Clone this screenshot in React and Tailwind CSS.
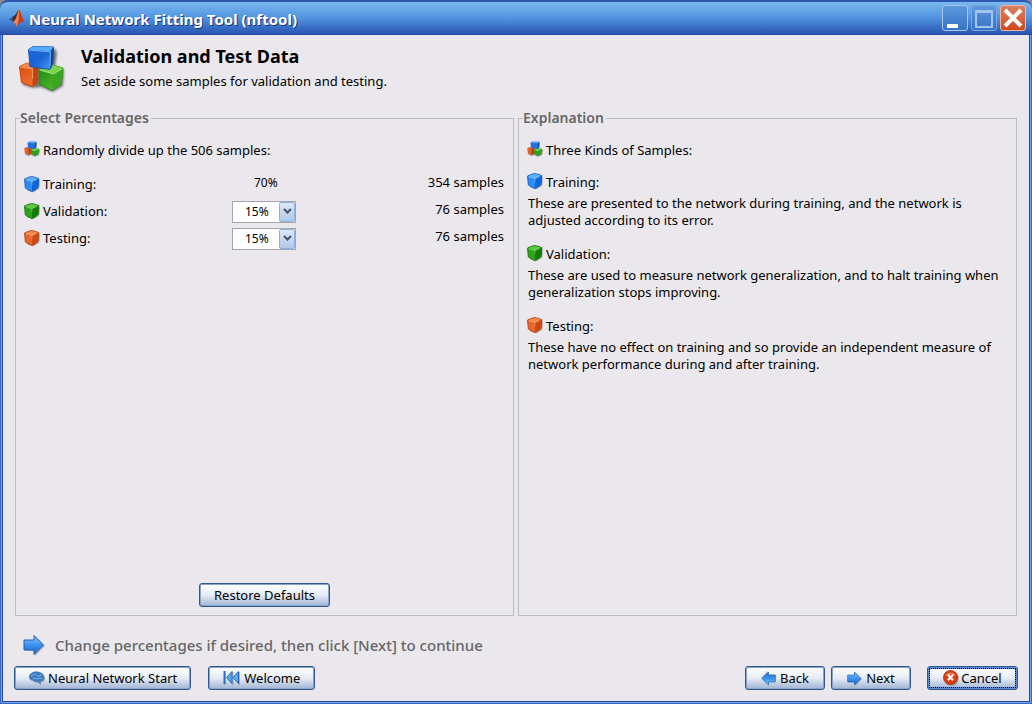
import React, { useState } from 'react';

const cubeColors = {
  blue: { top: '#5fb0fa', left: '#2c8cf6', right: '#0f66dc', edge: '#0f56b8' },
  green: { top: '#5cc83c', left: '#2fa41a', right: '#127c08', edge: '#126a0a' },
  orange: { top: '#f4884a', left: '#e8662a', right: '#cc4a10', edge: '#a83c0c' },
};

const Cube = ({ color }) => {
  const c = cubeColors[color];
  return (
    <svg viewBox="0 0 16 17" className="mb-px h-[17px] w-4 shrink-0" aria-hidden="true">
      <path d="M2 4 L9 2 L15.500 3 Q16.500 8 15 13 L9 16.500 L3 14 Z" fill="#666" opacity="0.45" />
      <path d="M0.500 3 Q4 1.200 7.500 0.500 Q11 1 14.700 2.500 L14.200 11.500 Q11 14.500 8 15.500 Q4.500 14.500 1.300 12 Z" fill={c.left} stroke={c.edge} strokeWidth="0.800" strokeLinejoin="round" />
      <path d="M8 5.400 L14.400 2.800 L13.900 11.400 Q11 14 8 15.100 Z" fill={c.right} />
      <path d="M1 3.200 Q4 1.500 7.500 0.900 Q11 1.400 14.200 2.800 L8 5.400 Z" fill={c.top} />
      <path d="M2 3.800 L8 5.600 L12 4 M8 5.600 V9" fill="none" stroke="#fff" strokeWidth="0.700" opacity="0.4" />
    </svg>
  );
};

const CubeStackSmall = () => (
  <svg viewBox="0 0 16 16" className="mb-0.5 size-4 shrink-0" aria-hidden="true">
    <path d="M5 2 L13 2 L12.500 7 L16 9 L15 14 L11 15.800 L7 14 L4 15 L1 13 L1 7 L5 6 Z" fill="#444" opacity="0.5" />
    <path d="M0.300 7 L4 6 L7.500 7 L7 12.500 L4.500 14 L0.800 12.500 Z" fill="#e8602a" />
    <path d="M4.500 8 L7.500 7 L7 12.500 L4.500 14 Z" fill="#b8420e" />
    <path d="M6.800 9 L11 7 L15.200 8 L14.500 13 L11 15 L7.200 13 Z" fill="#2ea01c" />
    <path d="M6.800 9 L11 7 L15.200 8 L11 10.200 Z" fill="#6cd048" />
    <path d="M3.500 1.500 L6 0.400 L12.300 0.800 L12 6 L10.500 8 L4 7 Z" fill="#2470dc" />
    <path d="M3.500 1.500 L6 0.400 L12.300 0.800 L11 2.300 Z" fill="#68b4fa" />
    <path d="M11 2.300 L12.300 0.800 L12 6 L10.500 8 Z" fill="#0e4cae" />
  </svg>
);

const CubeStack = () => (
  <svg viewBox="0 0 48 48" className="size-12 shrink-0" aria-hidden="true">
    <defs>
      <linearGradient id="blueFace" x1="0" y1="0" x2="1" y2="1">
        <stop offset="0" stopColor="#1a66dc" />
        <stop offset="0.500" stopColor="#1c64d4" />
        <stop offset="1" stopColor="#45a0f8" />
      </linearGradient>
      <linearGradient id="orangeFace" x1="0" y1="0" x2="0.500" y2="1">
        <stop offset="0" stopColor="#d84a0c" />
        <stop offset="1" stopColor="#f0702c" />
      </linearGradient>
      <linearGradient id="greenFace" x1="0" y1="0" x2="1" y2="1">
        <stop offset="0" stopColor="#1c8410" />
        <stop offset="1" stopColor="#5cc830" />
      </linearGradient>
      <filter id="soft" x="-20%" y="-20%" width="140%" height="140%">
        <feGaussianBlur stdDeviation="1.200" />
      </filter>
    </defs>
    <path d="M13 4 L36 4 L38 8 L36 22 L45 25 L44 41 L34 47 L22 42 L14 43 L4 40 L2 22 L12 19 Z" fill="#333" opacity="0.65" filter="url(#soft)" />
    <g strokeLinejoin="round" strokeWidth="1">
      <path d="M0.500 21.500 L8 18 L19 20 L18.500 38 L13.500 41.500 L2.500 37.500 Z" fill="url(#orangeFace)" stroke="#c8440c" />
      <path d="M0.500 21.500 L8 18 L19 20 L13.500 23.500 Z" fill="#f08850" />
      <path d="M13.500 23.500 L19 20 L18.500 38 L13.500 41.500 Z" fill="#c04410" />
      <path d="M1 22 L13.500 24 V34" fill="none" stroke="#ffc09a" opacity="0.6" />
      <path d="M20 24.500 L32 19.500 L44 23 L42.500 38.500 L33 45.500 L21 39.500 Z" fill="url(#greenFace)" stroke="#2c8c18" />
      <path d="M20 24.500 L32 19.500 L44 23 L34.500 29 Z" fill="#7ad450" />
      <path d="M34.500 29 L44 23 L42.500 38.500 L33 45.500 Z" fill="#38a820" />
      <path d="M20.500 25 L34.500 29 L43.500 23.500" fill="none" stroke="#b4f090" opacity="0.8" />
      <path d="M9.500 4.500 L14 1.500 L34.500 2 L34 18 L31 24.500 L11 21.500 Z" fill="url(#blueFace)" stroke="#1458b8" />
      <path d="M9.500 4.500 L14 1.500 L34.500 2 L31.500 6.500 Z" fill="#55acf8" />
      <path d="M31.500 6.500 L34.500 2 L34 18 L31 24.500 Z" fill="#0c48a4" />
      <path d="M10 5 L31.500 7 L31 21" fill="none" stroke="#9ad4ff" opacity="0.65" />
    </g>
  </svg>
);

const MatlabLogo = () => (
  <svg viewBox="0 0 16 18" className="h-5 w-4 shrink-0" aria-hidden="true">
    <path d="M0 10 L4.500 7 L7 9.500 L4 13 Z" fill="#2f5f7a" />
    <path d="M4.500 7 C7 6.500 8 2 9.500 1 L8.500 10 L5 12.500 L3.500 12.500 Z" fill="#4a2430" />
    <path d="M9.500 0.500 C12 2 13 9 15.700 13.500 C13 11.500 11 13.500 7.500 17.500 L8 8 Z" fill="#c83c1c" />
    <path d="M9.500 0.500 C10.500 6 10.500 12 7.500 17.500 C6.500 14.500 5.500 13.500 4 13 C7.500 11 8 5 9.500 0.500 Z" fill="#ee8448" />
  </svg>
);

const Arrow = ({ className }) => (
  <svg viewBox="0 0 22 22" className={`shrink-0 ${className}`} aria-hidden="true">
    <defs>
      <linearGradient id="arrowFill" x1="0" y1="0" x2="0" y2="1">
        <stop offset="0" stopColor="#8cc8fb" />
        <stop offset="0.500" stopColor="#3c92ee" />
        <stop offset="1" stopColor="#1c68cc" />
      </linearGradient>
    </defs>
    <path d="M2 7 H12 V2 L22 12 L12 22 V17 H2 Z" fill="#777" opacity="0.45" />
    <path d="M1 6 H11 V1.500 L20.500 11 L11 20.500 V16 H1 Z" fill="url(#arrowFill)" stroke="#1f5fae" strokeLinejoin="round" />
  </svg>
);

const BrainIcon = () => (
  <svg viewBox="0 0 18 16" className="h-4 w-[18px] shrink-0" aria-hidden="true">
    <path d="M2 8 C2 4 6 2 9 2 C13 2 17 4.500 17 8.500 C17 11 15 12 13 12 L13 15 L10.500 12.500 C8 13 6 12 5 11 C3 11 2 10 2 8 Z" fill="#444" opacity="0.5" />
    <path d="M1 7 C1 3.500 5 1.500 8.500 1.500 C12.500 1.500 16 4 16 7.500 C16 10 14 11 12.500 11 L12 14 L9.500 11.500 C7 12 5.500 11 4.500 10 C2.500 10 1 9 1 7 Z" fill="#3c7cc4" />
    <path d="M3 6 C5 4 6 6 8 4 M9 6.500 C10 5 11 7 13.500 5 M5 8.500 C7 7.500 8 9.500 10 8.500 C12 8 13 9 14 8" fill="none" stroke="#8cc0ec" strokeWidth="0.900" />
  </svg>
);

const RewindIcon = () => (
  <svg viewBox="0 0 17 16" className="h-4 w-[17px] shrink-0" aria-hidden="true">
    <path d="M2 2 V15 M10 2 L4 8 L10 15 Z M17 2 L11 8 L17 15 Z" fill="#666" stroke="#666" opacity="0.4" />
    <path d="M1.500 1 V14" stroke="#2a6cc0" strokeWidth="2" />
    <path d="M9 1.500 L3.500 7.500 L9 13.500 Z M15.500 1.500 L10 7.500 L15.500 13.500 Z" fill="#5aaaf4" stroke="#2463b4" strokeWidth="1" />
  </svg>
);

const StopIcon = () => (
  <svg viewBox="0 0 16 16" className="size-4 shrink-0" aria-hidden="true">
    <circle cx="8.500" cy="8.500" r="7.300" fill="#666" opacity="0.5" />
    <circle cx="7.500" cy="7.500" r="7" fill="#e03a10" stroke="#a82808" strokeWidth="0.800" />
    <path d="M2 6 A6 6 0 0 1 13 6 Q7.500 3 2 6 Z" fill="#fff" opacity="0.35" />
    <path d="M5.500 5.500 L9.500 9.500 M9.500 5.500 L5.500 9.500" stroke="#fff" strokeWidth="2.200" strokeLinecap="round" />
  </svg>
);

const Button = ({ children, className = '' }) => (
  <button
    type="button"
    className={`flex h-6 items-center justify-center rounded-[3px] border border-[#2f568f] bg-linear-to-b from-white via-[#e6ecf4] to-[#a0b4d4] whitespace-nowrap inset-shadow-[0_0_0_1px_#8aa4c8] ${className}`}
  >
    {children}
  </button>
);

const PercentSelect = ({ id, value, onChange }) => (
  <div className="relative h-[22px] w-16">
    <select
      id={id}
      value={value}
      onChange={(e) => onChange(Number(e.target.value))}
      className="h-full w-full appearance-none border border-[#a5a5ac] bg-white pl-3 text-xs text-black"
    >
      {[5, 10, 15, 20, 25, 30, 35].map((n) => (
        <option key={n} value={n}>{n}%</option>
      ))}
    </select>
    <span className="pointer-events-none absolute inset-y-px right-px flex w-4 items-center justify-center rounded-[2px] border border-[#8fb0dc] bg-linear-to-b from-[#dce8f8] to-[#b0c8e8]">
      <svg viewBox="0 0 9 7" className="h-[7px] w-[9px]" aria-hidden="true">
        <path d="M1 1 L4.500 4.500 L8 1" fill="none" stroke="#44566c" strokeWidth="2.200" />
      </svg>
    </span>
  </div>
);

const Panel = ({ title, children }) => (
  <fieldset className="flex min-w-0 flex-1 flex-col border border-[#bdbcc0] px-2 pb-2">
    <legend className="-ml-1 pr-0.5 text-sm leading-4 font-semibold text-[#666]">{title}</legend>
    {children}
  </fieldset>
);

const kinds = [
  { name: 'Training', color: 'blue', text: 'These are presented to the network during training, and the network is adjusted according to its error.' },
  { name: 'Validation', color: 'green', text: 'These are used to measure network generalization, and to halt training when generalization stops improving.' },
  { name: 'Testing', color: 'orange', text: 'These have no effect on training and so provide an independent measure of network performance during and after training.' },
];

const TOTAL = 506;

const App = () => {
  const [validation, setValidation] = useState(15);
  const [testing, setTesting] = useState(15);

  const samples = (percent) => Math.round((TOTAL * percent) / 100);
  const training = TOTAL - samples(validation) - samples(testing);

  const rows = [
    { ...kinds[0], count: training },
    { ...kinds[1], value: validation, set: setValidation, count: samples(validation) },
    { ...kinds[2], value: testing, set: setTesting, count: samples(testing) },
  ];

  return (
    <div className="bg-[#8a8a8a]">
      <div className="flex min-h-screen flex-col rounded-t-lg border border-t-0 border-[#3a68c4] bg-[#ebe8ed] px-0.5 pb-0.5 font-['Noto_Sans','Open_Sans',sans-serif] text-[13px] leading-[17px] text-black shadow-[inset_0_0_0_1px_#6ea6ec,inset_0_0_0_2px_#2448a0]">
        {/* Title bar */}
        <header className="-mx-[3px] flex h-[35px] items-center gap-1 rounded-t-lg border-t-2 border-b border-t-[#2c56b0] border-b-[#2448a0] bg-linear-to-b from-[#7ab8ee] via-[#5293e0] to-[#2a54b2] pr-1.5 pl-[9px]">
          <MatlabLogo />
          <span className="flex-1 pt-0.5 text-[15px] font-bold text-white text-shadow-[1px_1px_0_#1a3080]">
            Neural Network Fitting Tool (nftool)
          </span>
          <div className="flex gap-[3px]">
            <button type="button" aria-label="Minimize" className="size-[26px] rounded-[3px] border border-[#a8c8ea] bg-linear-to-b from-[#5f98dc] to-[#3474c4]">
              <svg viewBox="0 0 24 24" aria-hidden="true"><path d="M4 18 H15 V22 H4 Z" fill="#fff" /></svg>
            </button>
            <button type="button" aria-label="Maximize" className="size-[26px] rounded-[3px] border border-[#7aa6dc] bg-linear-to-b from-[#5f98dc] to-[#3474c4]">
              <svg viewBox="0 0 24 24" aria-hidden="true"><path d="M4 5 H20 V21 H4 Z M3 6 H21" fill="none" stroke="#a4c6ee" strokeWidth="2" /></svg>
            </button>
            <button type="button" aria-label="Close" className="size-[26px] rounded-[3px] border border-[#f0b8a0] bg-linear-to-b from-[#d88060] to-[#d04818]">
              <svg viewBox="0 0 24 24" aria-hidden="true"><path d="M4 4 L20 20 M20 4 L4 20" stroke="#fff" strokeWidth="4" /></svg>
            </button>
          </div>
        </header>

        <div className="flex gap-3.5 px-4 pt-2.5">
          <CubeStack />
          <div>
            <h1 className="text-lg leading-[22px] font-bold">Validation and Test Data</h1>
            <p className="pt-1.5">Set aside some samples for validation and testing.</p>
          </div>
        </div>

        <main className="flex flex-1 flex-col px-3 pt-[17px]">
          <div className="flex flex-1 gap-1">
            <Panel title="Select Percentages">
              <p className="flex items-center gap-[3px] pt-[15px]">
                <CubeStackSmall />
                Randomly divide up the 506 samples:
              </p>
              <table className="mt-3 w-full">
                <tbody>
                  {rows.map((row) => (
                    <tr key={row.name} className="h-[27px]">
                      <th scope="row" className="w-[208px] p-0 text-left font-normal">
                        <span className="flex items-center gap-[3px]">
                          <Cube color={row.color} />
                          {row.set ? <label htmlFor={row.name}>{row.name}:</label> : `${row.name}:`}
                        </span>
                      </th>
                      <td className="p-0">
                        {row.set ? (
                          <PercentSelect id={row.name} value={row.value} onChange={row.set} />
                        ) : (
                          <span className="block pb-1 pl-[22px] text-xs">{100 - validation - testing}%</span>
                        )}
                      </td>
                      <td className="p-0 pr-px pb-1 text-right">{row.count} samples</td>
                    </tr>
                  ))}
                </tbody>
              </table>
              <div className="mt-auto flex justify-center">
                <Button className="px-3.5">Restore Defaults</Button>
              </div>
            </Panel>

            <Panel title="Explanation">
              <p className="flex items-center gap-[3px] pt-[15px]">
                <CubeStackSmall />
                Three Kinds of Samples:
              </p>
              <div className="flex flex-col gap-4 pt-3.5">
                {kinds.map((kind) => (
                  <div key={kind.name}>
                    <h2 className="flex items-center gap-[3px]">
                      <Cube color={kind.color} />
                      {kind.name}:
                    </h2>
                    <p className="pt-1 pl-px">{kind.text}</p>
                  </div>
                ))}
              </div>
            </Panel>
          </div>

          <p className="flex items-center gap-2.5 pt-[18px] pl-2 text-[15px] leading-5 font-medium text-[#666]">
            <Arrow className="size-[22px]" />
            Change percentages if desired, then click [Next] to continue
          </p>
        </main>

        <footer className="flex px-[11px] pt-2.5 pb-[11px]">
          <Button className="gap-0.5 px-[13px]">
            <BrainIcon />
            Neural Network Start
          </Button>
          <Button className="ml-[17px] gap-1 px-3.5">
            <RewindIcon />
            Welcome
          </Button>
          <Button className="ml-auto w-20 gap-1">
            <Arrow className="size-[15px] rotate-180" />
            Back
          </Button>
          <Button className="ml-1.5 w-20 gap-1">
            <Arrow className="size-[15px]" />
            Next
          </Button>
          <Button className="ml-4 w-[91px] gap-0.5 border-[#1f4a9c] inset-shadow-[0_0_0_2px_#5c8cd4] outline-1 -outline-offset-3 outline-black outline-dotted">
            <StopIcon />
            Cancel
          </Button>
        </footer>
      </div>
    </div>
  );
};

export default App;
